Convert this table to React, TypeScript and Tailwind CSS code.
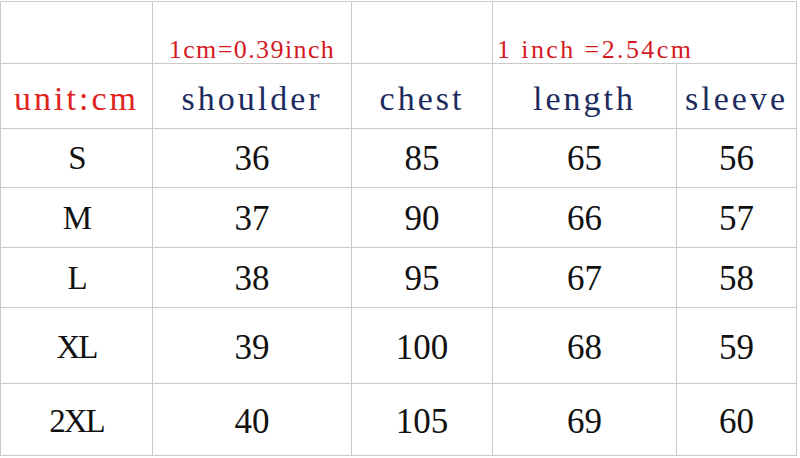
const sizes = [
  { size: "S", vals: ["36", "85", "65", "56"] },
  { size: "M", vals: ["37", "90", "66", "57"] },
  { size: "L", vals: ["38", "95", "67", "58"] },
  { size: "XL", vals: ["39", "100", "68", "59"] },
  { size: "2XL", vals: ["40", "105", "69", "60"] },
];

const headers = ["shoulder", "chest", "length", "sleeve"];

export default function App() {
  return (
    <div
      className="w-[800px] h-[458px] overflow-hidden bg-white pt-px"
      style={{ fontFamily: '"Liberation Serif", "Times New Roman", serif' }}
    >
      <div className="inline-grid grid-cols-[151px_198px_140px_183px_119px] grid-rows-[61px_64px_58px_59px_59px_75px_71px] gap-px p-px bg-[#c9c9c9]">
        {/* conversion notes */}
        <div className="bg-white" />
        <div className="bg-white flex items-end justify-center text-[26px] leading-none tracking-[1.4px] text-[#d31a1f]">
          1cm=0.39inch
        </div>
        <div className="bg-white" />
        <div className="col-span-2 bg-white flex items-end pl-[4px] text-[26px] leading-none tracking-[2.4px] text-[#d31a1f] whitespace-pre">
          1 inch =2.54cm
        </div>

        {/* column headers */}
        <div className="bg-white flex items-center justify-center pt-[6px] text-[34px] leading-none tracking-[3px] text-[#e0231c]">
          unit:cm
        </div>
        {headers.map((h) => (
          <div
            key={h}
            className="bg-white flex items-center justify-center pt-[6px] text-[34px] leading-none tracking-[3px] text-[#1d2b5e]"
          >
            {h}
          </div>
        ))}

        {/* sizes */}
        {sizes.map((row, i) => (
          <div key={row.size} className="contents">
            <div
              className={`bg-white flex items-center justify-center text-[33px] leading-none tracking-[-2px] text-[#111] ${i > 2 ? "pt-[4px]" : "pt-[1px]"}`}
            >
              {row.size}
            </div>
            {row.vals.map((v, j) => (
              <div
                key={j}
                className={`bg-white flex items-center justify-center text-[35px] leading-none text-[#111] ${i > 2 ? "pt-[4px]" : "pt-[1px]"}`}
              >
                {v}
              </div>
            ))}
          </div>
        ))}
      </div>
    </div>
  );
}
